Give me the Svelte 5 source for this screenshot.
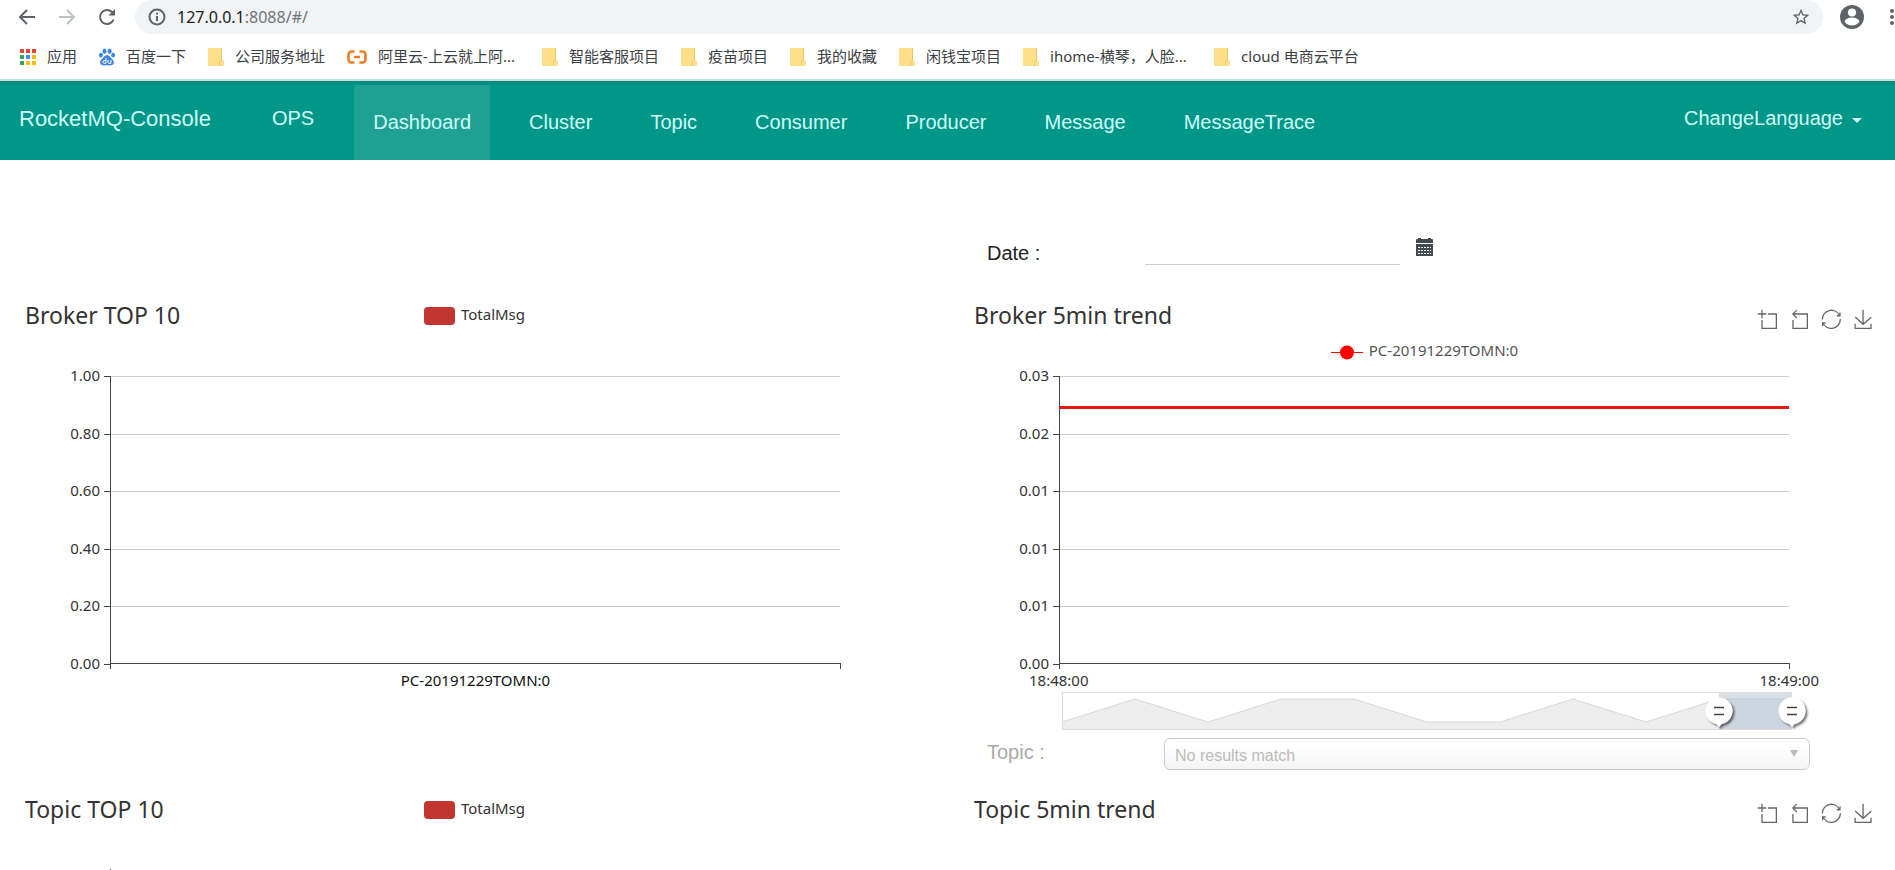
<script>
  const bookmarks = [
    { icon: 'apps', label: '应用' },
    { icon: 'paw', label: '百度一下' },
    { icon: 'folder', label: '公司服务地址' },
    { icon: 'cloud', label: '阿里云-上云就上阿...', long: true },
    { icon: 'folder', label: '智能客服项目' },
    { icon: 'folder', label: '疫苗项目' },
    { icon: 'folder', label: '我的收藏' },
    { icon: 'folder', label: '闲钱宝项目' },
    { icon: 'folder', label: 'ihome-横琴，人脸...', long: true },
    { icon: 'folder', label: 'cloud 电商云平台' },
  ];
  const appDots = ['#ea4335', '#ea4335', '#ea4335', '#34a853', '#4285f4', '#fbbc05', '#34a853', '#fbbc05', '#fbbc05'];
  const links = ['Dashboard', 'Cluster', 'Topic', 'Consumer', 'Producer', 'Message', 'MessageTrace'];
  const totals = ['1.00', '0.80', '0.60', '0.40', '0.20', '0.00'];
  const rates = ['0.03', '0.02', '0.01', '0.01', '0.01', '0.00'];
  const tools = [
    { name: 'Area zoom', d: 'M0,13.5h26.9 M13.5,26.9V0 M32.1,13.5H58V58H13.5V32.1' },
    { name: 'Restore zoom', d: 'M22,1.4L9.9,13.5l12.3,12.3 M10.3,13.5H54.9v44.6H10.3v-26' },
    { name: 'Restore', d: 'M47,18.9h9.8V8.7 M56.3,20.1C52.1,9,40.5,0.6,26.8,2.1C12.6,3.7,1.6,16.2,2.1,30.6 M13,41.1H3.1v10.2 M3.7,39.9c4.2,11.1,15.8,19.5,29.5,18c14.2-1.6,25.2-14.1,24.7-28.5' },
    { name: 'Save as image', d: 'M4.7,22.9L29.3,45.5L54.7,23.4M4.6,43.6V58H53.8V43.6M29.2,45.1V0' },
  ];
  let from = $state(90);
  let to = $state(100);
</script>

{#snippet toolbox()}
  <div class="toolbox">
    {#each tools as tool}
      <button type="button" aria-label={tool.name}>
        <svg viewBox="-2 -2 62 62" width="20" height="20"><path d={tool.d} /></svg>
      </button>
    {/each}
  </div>
{/snippet}

{#snippet plot(ticks, line)}
  <div class="plot">
    <div class="ticks">
      {#each ticks as t}<span>{t}</span>{/each}
    </div>
    <svg class="lines" width="100%" height="288">
      {#each ticks as t, i}
        {@const y = Math.round(i * 57.5)}
        {#if i < 5}<rect class="rule" x="0" y={y} width="100%" height="1" />{/if}
        <rect class="axis" x="-6" y={y} width="6" height="1" />
      {/each}
      <rect class="axis" x="0" y="0" width="1" height="293" />
      <rect class="axis" x="0" y="287" width="100%" height="1" />
      <rect class="axis" x="100%" y="287" width="1" height="6" />
      {#if line}<rect class="series" x="0" y="30" width="100%" height="3" />{/if}
    </svg>
  </div>
{/snippet}

<div class="page">
  <header class="browser">
    <div class="toolbar">
      <button type="button" aria-label="Back"><svg width="18" height="18" viewBox="0 0 18 18" class="nav-ico"><path d="M17 9H2M9 2L2 9l7 7" /></svg></button>
      <button type="button" aria-label="Forward" disabled><svg width="18" height="18" viewBox="0 0 18 18" class="nav-ico dim"><path d="M1 9h15M9 2l7 7-7 7" /></svg></button>
      <button type="button" aria-label="Reload"><svg width="18" height="18" viewBox="0 0 18 18" class="nav-ico"><path d="M15.600 11.500A7 7 0 1 1 14 4L16 6" /><path d="M17 1v6.500h-6.500z" fill="#5f6368" stroke="none" /></svg></button>
      <div class="omnibox">
        <svg width="18" height="18" viewBox="0 0 18 18" class="nav-ico"><circle cx="9" cy="9" r="7.500" /><path d="M9 8v5M9 4.800v1.800" /></svg>
        <span class="url">127.0.0.1<span class="path">:8088/#/</span></span>
        <svg width="20" height="20" viewBox="0 0 24 24"><path fill="#5f6368" d="M22 9.240l-7.190-.62L12 2 9.190 8.630 2 9.240l5.460 4.730L5.820 21 12 17.270 18.180 21l-1.630-7.030L22 9.240zM12 15.400l-3.760 2.270 1-4.280-3.320-2.880 4.380-.38L12 6.100l1.710 4.040 4.380.38-3.320 2.880 1 4.280L12 15.400z" /></svg>
      </div>
      <svg class="profile" width="24" height="24" viewBox="0 0 24 24"><circle cx="12" cy="12" r="12" fill="#5f6368" /><circle cx="12" cy="7.500" r="4" fill="#fff" /><path d="M4.500 16.500c1-3 5-4 7.500-4s6.500 1 7.500 4c-1.500 2.500-4.500 4-7.500 4s-6-1.500-7.500-4z" fill="#fff" /></svg>
      <svg class="more" width="6" height="18" viewBox="0 0 6 18" fill="#5f6368"><circle cx="3" cy="3" r="2" /><circle cx="3" cy="9" r="2" /><circle cx="3" cy="15" r="2" /></svg>
    </div>
    <div class="bookmarks">
      {#each bookmarks as b}
        <a href="#/">
          {#if b.icon === 'apps'}
            <svg width="16" height="16" viewBox="0 0 16 16">
              {#each appDots as c, i}<rect x={(i % 3) * 6} y={Math.floor(i / 3) * 6} width="4" height="4" fill={c} />{/each}
            </svg>
          {:else if b.icon === 'paw'}
            <svg width="16" height="18" viewBox="0 0 16 18" fill="#3e83e8">
              <ellipse cx="5.500" cy="3.200" rx="2" ry="2.700" /><ellipse cx="10.600" cy="3.200" rx="2" ry="2.700" />
              <ellipse cx="1.900" cy="7.200" rx="1.900" ry="2.400" /><ellipse cx="14.100" cy="7.200" rx="1.900" ry="2.400" />
              <path d="M8 7c2.500 0 3 2.300 4.800 3.800 2 1.800 2.600 3.400 1.700 5-1.500 2.500-4 1.400-6.500 1.400s-5 1.100-6.500-1.400c-.9-1.600-.3-3.200 1.700-5C5 9.300 5.500 7 8 7z" />
              <path d="M7 10v5.300M7 12.500H5c-1.300 0-1.300 2.800 0 2.800h2M9 12v2.300q0 1 1 1h2V12" fill="none" stroke="#fff" />
            </svg>
          {:else if b.icon === 'cloud'}
            <svg width="20" height="14" viewBox="0 0 20 14" fill="none" stroke="#ef7d20" stroke-width="2.600"><path d="M7.500 1.500H4.500a3 3 0 0 0-3 3v5a3 3 0 0 0 3 3h3M12.500 1.500h3a3 3 0 0 1 3 3v5a3 3 0 0 1-3 3h-3M7 7h6" /></svg>
          {:else}
            <svg width="16" height="18" viewBox="0 0 16 18"><path d="M0 1q0-1 1-1h12q1 0 1 1v11l2 1v4q0 1-1 1H1q-1 0-1-1z" fill="#ffe08a" /><path d="M13.500 0v12.500l-2 1.500v3.500" fill="none" stroke="#edc75d" /></svg>
          {/if}
          <span class:long={b.long}>{b.label}</span>
        </a>
      {/each}
    </div>
  </header>

  <nav>
    <a class="brand" href="#/">RocketMQ-Console</a>
    <a class="ops" href="#/ops">OPS</a>
    <div class="links">
      {#each links as l, i}
        <a href="#/{l}" class:active={i === 0}>{l}</a>
      {/each}
    </div>
    <button type="button" class="lang">ChangeLanguage <span class="caret"></span></button>
  </nav>

  <main>
    <div class="date-row">
      <label for="date">Date :</label>
      <input id="date" type="text" />
      <svg width="17" height="18" viewBox="0 0 17 18" fill="#444b50">
        <path d="M0 2q0-1 1-1h1V0h3v1h7V0h3v1h1q1 0 1 1v3H0zM0 6h17V18H0z" />
        <path d="M2 9.500h13M2 12.500h13M2 15.500h13" stroke="#fff" stroke-dasharray="2 1" />
      </svg>
    </div>

    <section>
      <div class="head">
        <h2>Broker TOP 10</h2>
        <div class="legend"><i class="swatch"></i><span>TotalMsg</span></div>
      </div>
      <div class="spacer"></div>
      {@render plot(totals, false)}
      <div class="category">PC-20191229TOMN:0</div>
    </section>

    <section>
      <div class="head">
        <h2>Broker 5min trend</h2>
        <span></span>
        {@render toolbox()}
      </div>
      <div class="spacer legend soft">
        <svg width="32" height="16" viewBox="0 0 32 16"><path d="M0 8.500h32" stroke="#f00" /><circle cx="16" cy="8.500" r="7" fill="#f00" /></svg>
        <span>PC-20191229TOMN:0</span>
      </div>
      {@render plot(rates, true)}
      <div class="times"><span>18:48:00</span><span>18:49:00</span></div>
      <div class="zoom">
        <svg width="100%" height="37" viewBox="0 0 100 37" preserveAspectRatio="none">
          <path d="M0 30L10 7 20 30 30 7H40L50 30H60L70 7 80 30 90 7H100V37H0z" fill="#ededed" />
          <path d="M0 30L10 7 20 30 30 7H40L50 30H60L70 7 80 30 90 7H100" class="trace" />
          <rect x={from} y="0" width={to - from} height="37" fill="#a7b7cc" fill-opacity="0.45" />
        </svg>
        <input type="range" min="0" max="100" aria-label="Range start" bind:value={from} />
        <input type="range" min="0" max="100" aria-label="Range end" bind:value={to} />
      </div>
      <div class="topic-row">
        <label for="topic">Topic :</label>
        <div class="picker">
          <select id="topic" disabled><option>No results match</option></select>
        </div>
      </div>
    </section>

    <section>
      <div class="head">
        <h2>Topic TOP 10</h2>
        <div class="legend"><i class="swatch"></i><span>TotalMsg</span></div>
      </div>
      <div class="axis-start"></div>
    </section>

    <section>
      <div class="head">
        <h2>Topic 5min trend</h2>
        <span></span>
        {@render toolbox()}
      </div>
    </section>
  </main>
</div>

<style>
  :global(body) { background: #fff; }
  .page { height: 100vh; overflow: hidden; font-family: "Liberation Sans", Arial, sans-serif; color: #333; }
  a { text-decoration: none; color: inherit; }
  button { border: 0; padding: 0; background: none; font: inherit; color: inherit; display: flex; align-items: center; }
  svg { display: block; flex: none; }

  .browser { font-family: "Noto Sans", "Noto Sans CJK SC", sans-serif; border-bottom: 2px solid #bfe5e1; }
  .toolbar { display: flex; align-items: center; height: 34px; padding-left: 18px; overflow: hidden; }
  .toolbar button { margin-right: 22px; }
  .nav-ico { fill: none; stroke: #5f6368; stroke-width: 2; }
  .nav-ico.dim { stroke: #bdc1c6; }
  .omnibox { flex: 1; display: flex; align-items: center; gap: 11px; height: 34px; margin-left: -3px; padding: 0 12px 0 13px; border-radius: 17px; background: #f1f3f4; }
  .url { flex: 1; font-size: 16px; color: #202124; }
  .url .path { color: #70757a; }
  .profile { margin: 0 25px 0 17px; }
  .bookmarks { display: flex; align-items: center; gap: 22px; height: 45px; padding-left: 20px; font-size: 15px; line-height: 20px; color: #3c4043; white-space: nowrap; }
  .bookmarks a { display: flex; align-items: center; gap: 11px; }
  .bookmarks span { padding-bottom: 2px; }
  .bookmarks .long { min-width: 142px; }

  nav { display: flex; height: 79px; background: linear-gradient(#16857a 0, #009688 4px); color: #cffcf7; font-size: 20px; line-height: 75px; }
  .brand { padding: 0 61px 0 19px; font-size: 22px; }
  .ops { padding-right: 40px; }
  .links { display: flex; gap: 20px; height: 75px; margin-top: 4px; }
  .links a { padding: 0 19px; }
  .links .active { background: #1ea193; }
  .lang { height: 75px; margin-left: auto; padding-right: 33px; gap: 9px; }
  .caret { border: 5px solid transparent; border-top-color: #cffcf7; border-bottom: 0; margin-top: 3px; }

  main { display: grid; grid-template-columns: 1fr 1fr; column-gap: 3px; }
  .date-row { grid-column: 2; display: flex; align-items: flex-start; height: 62px; padding: 78px 0 0 38px; font-size: 20px; }
  .date-row label { width: 158px; line-height: 30px; color: #222; }
  .date-row input { box-sizing: border-box; width: 255px; height: 27px; margin-right: 16px; border: 0; border-bottom: 1px solid #ccc; outline: 0; background: none; font: inherit; }

  section { min-height: 494px; font-family: "Noto Sans", "Noto Sans CJK SC", sans-serif; font-size: 15px; }
  .head { display: grid; grid-template-columns: 1fr auto 1fr; align-items: center; height: 32px; padding: 0 22px 0 25px; }
  h2 { margin: 0; padding-bottom: 2px; font-size: 23px; line-height: 30px; font-weight: 400; white-space: nowrap; }
  .legend { display: flex; align-items: center; justify-content: center; gap: 6px; line-height: 20px; }
  .legend span { padding-bottom: 4px; }
  .swatch { width: 31px; height: 18px; border-radius: 4px; background: #c23531; }
  .toolbox { display: flex; justify-content: flex-end; gap: 12px; padding-top: 6px; }
  .toolbox path { fill: none; stroke: #666; stroke-width: 4; }
  .spacer { height: 44px; }
  .spacer.legend { height: 40px; padding: 0 106px 4px 111px; }
  .soft { color: #555; }

  .plot { display: flex; gap: 10px; padding-right: 106px; }
  .ticks { display: flex; flex-direction: column; justify-content: space-between; width: 100px; height: 304px; margin: -9px 0 -7px; line-height: 16px; text-align: right; }
  .lines { flex: 1; width: auto; min-width: 0; overflow: visible; shape-rendering: crispEdges; }
  .rule { fill: #ccc; }
  .axis { fill: #444; }
  .series { fill: #e81515; }
  .category { margin: 8px 106px 0 111px; line-height: 16px; text-align: center; color: #111; }
  .times { display: flex; justify-content: space-between; margin: 8px 76px 0 80px; line-height: 16px; }

  .zoom { position: relative; box-sizing: border-box; margin: 4px 103px 0 113px; height: 38px; outline: 1px solid #ddd; outline-offset: -1px; }
  .trace { fill: none; stroke: #d8d8d8; vector-effect: non-scaling-stroke; }
  .zoom input { position: absolute; left: -18px; top: 0; width: calc(100% + 36px); height: 38px; margin: 0; appearance: none; background: none; pointer-events: none; }
  .zoom input::-webkit-slider-thumb {
    appearance: none; width: 36px; height: 38px; pointer-events: auto; border: 0; border-radius: 0;
    background: url("data:image/svg+xml,%3Csvg xmlns='http://www.w3.org/2000/svg' width='36' height='38'%3E%3Cdefs%3E%3Cfilter id='s' x='-20%25' y='-20%25' width='150%25' height='150%25'%3E%3CfeDropShadow dx='2' dy='2' stdDeviation='1.2' flood-opacity='.55'/%3E%3C/filter%3E%3C/defs%3E%3Cpath filter='url(%23s)' fill='white' d='M18 35l-2.500-3A13.500 13.500 0 1 1 20.500 32z'/%3E%3Cpath d='M13 15.500h10M13 22.500h10' stroke='%23444' stroke-width='1.500'/%3E%3C/svg%3E");
  }
  .topic-row { display: flex; align-items: center; height: 32px; padding: 8px 85px 0 38px; font: 20px "Liberation Sans", Arial, sans-serif; }
  .topic-row label { width: 177px; padding-bottom: 4px; color: #aaa; }
  .picker { flex: 1; display: flex; position: relative; }
  .picker::after { content: ""; position: absolute; right: 12px; top: 12px; border: 4px solid transparent; border-top: 7px solid #bbb; border-bottom: 0; pointer-events: none; }
  select { flex: 1; height: 32px; padding: 2px 10px 0; border: 1px solid #ccc; border-radius: 6px; appearance: none; background: linear-gradient(#fff 20%, #f4f4f4); font: 16px "Liberation Sans", Arial, sans-serif; color: #bbb; opacity: 1; }
  .axis-start { width: 1px; height: 20px; margin: 43px 0 0 110px; background: #444; }
</style>
